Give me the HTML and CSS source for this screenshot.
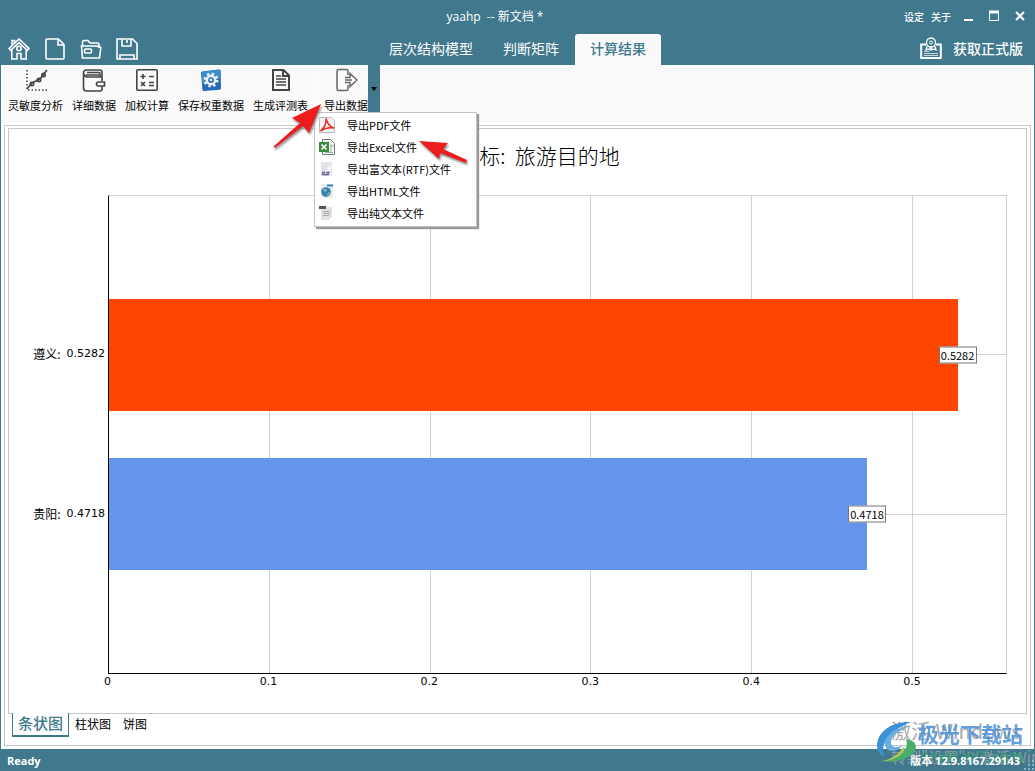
FILE: index.html
```html
<!DOCTYPE html>
<html lang="zh-CN">
<head>
<meta charset="utf-8">
<title>yaahp -- 新文档 *</title>
<link rel="stylesheet" href="styles.css">
</head>
<body>
<div class="window">
  <header class="header">
    <div class="titlebar">
      <div class="side"></div>
      <h1 class="title">yaahp&nbsp; -- 新文档 *</h1>
      <div class="side side-right">
        <button class="link-btn">设定</button>
        <button class="link-btn">关于</button>
        <button class="win-btn" aria-label="最小化"><svg width="12" height="12"><path d="M2 10h9" stroke="#fff" stroke-width="2"/></svg></button>
        <button class="win-btn" aria-label="最大化"><svg width="12" height="12"><path d="M1.500 1v9.500h9V1" fill="none" stroke="#fff"/><path d="M1 2h10" stroke="#fff" stroke-width="3"/></svg></button>
        <button class="win-btn" aria-label="关闭"><svg width="12" height="12"><path d="M2 2l8 8M10 2l-8 8" stroke="#fff" stroke-width="2"/></svg></button>
      </div>
    </div>
    <div class="navbar">
      <div class="quick">
        <button aria-label="首页"><svg width="22" height="22" viewBox="0 0 22 22"><path d="M1 10.500L11 1l10 9.500-1.600 1.800L11 4.600l-8.400 7.700zM3.800 11.500V21H9v-5.500h4V21h5.200v-9.500M4 7V2.500h2.500V5"/><circle cx="11" cy="10.500" r="2.200"/></svg></button>
        <button aria-label="新建"><svg width="22" height="22" viewBox="0 0 22 22"><path d="M3 1h11.500l5.500 5.500V20q0 1-1 1H3q-1 0-1-1V2q0-1 1-1zM14 1v6h6"/></svg></button>
        <button aria-label="打开"><svg width="22" height="22" viewBox="0 0 22 22"><path d="M2.500 8V4q0-1.500 1.500-1.500h4L10 5h7.500q1.500 0 1.500 1.500V8M1.500 8h17l2.300 1.500L19.500 20h-17zM18.500 8v2"/><rect x="4.500" y="11" width="7" height="4" rx="1"/></svg></button>
        <button aria-label="保存"><svg width="22" height="22" viewBox="0 0 22 22"><path d="M1 1h15.500L21 5.500V21H1zM6 1v7h9V1M11 2v3M4 21v-4h14v4"/></svg></button>
      </div>
      <nav class="tabs">
        <button class="tab">层次结构模型</button>
        <button class="tab">判断矩阵</button>
        <button class="tab active">计算结果</button>
      </nav>
      <button class="upgrade">
        <svg width="22" height="22" viewBox="0 0 22 22" fill="none" stroke="#fff"><path d="M6 7.500H1.200V21h19.600V7.500H16" stroke-width="2"/><circle cx="11" cy="5.500" r="4.500" stroke-width="1.300"/><circle cx="11" cy="5.500" r="1.500"/><path d="M7 9l-1 4 2.500-1L10 13l1-3 1 3 1.500-1 2.500 1-1-4" stroke-width="1.300"/><path d="M4 14.500h5M4 16.500h14M4 18.500h14" stroke="#c5d8df"/></svg>
        获取正式版
      </button>
    </div>
  </header>

  <main class="main">
    <div class="toolbar">
      <button class="tool"><svg width="24" height="24" viewBox="0 0 24 24"><path d="M3 2v20h20" stroke-dasharray="1.500 2"/><path d="M3 21l5-6 8-4 7-9"/><circle cx="8" cy="16" r="1.700"/><circle cx="15" cy="12" r="1.700"/><circle cx="19.500" cy="7" r="1.700"/></svg>灵敏度分析</button>
      <button class="tool"><svg width="24" height="24" viewBox="0 0 24 24"><path d="M20 13V4q0-2-2-2H4.500Q1.500 2 1.500 5v15q0 3 3 3H18q2 0 2-2v-3M2 6q1 3 3 3h15M5 4.500h12q1 0 1 1.500v3M4 7h13M22.500 14h-6q-2 0-2 2t2 2h6z"/></svg>详细数据</button>
      <button class="tool"><svg width="24" height="24" viewBox="0 0 24 24"><rect x="1.800" y="1.800" width="20.400" height="20.400" rx="1"/><path d="M5.500 8.500h5M8 6v5M14 8.500h5M6 14l4 4M10 14l-4 4M14 14.500h5M14 17.500h5"/></svg>加权计算</button>
      <button class="tool"><svg width="24" height="24" viewBox="0 0 24 24"><path d="M3 3.500L20 1.500q1.500 0 1.600 1.500L22 20q0 1.500-1.500 1.700L5 23q-1.500 0-1.600-1.500L2 5q0-1.300 1-1.500z" fill="#246bb9" stroke="none"/><path d="M3 4l17-2.500q1.500 0 1.600 1.500l.2 7Q11 10 3 16z" fill="#398ed0" stroke="none"/><circle cx="12" cy="12" r="6.200" stroke="#eee" stroke-width="2.500" stroke-dasharray="2.400 2.470"/><circle cx="12" cy="12" r="4.200" stroke="#eee" stroke-width="2.500"/><circle cx="12" cy="12" r="1.300" fill="#eee" stroke="none"/></svg>保存权重数据</button>
      <button class="tool"><svg width="24" height="24" viewBox="0 0 24 24"><path d="M4 2h10.500L20 7.500V22H4zM14 2v6h6" stroke-width="2"/><path d="M7 8h5M7 11h10M7 14h10M7 17h10"/></svg>生成评测表</button>
      <div class="export">
        <button class="tool"><svg width="24" height="24" viewBox="0 0 24 24"><path d="M14 7V3q0-1.500-1.500-1.500h-8Q3 1.500 3 3v18q0 1.500 1.500 1.500h8q1.500 0 1.500-1.500v-4M11 9.500h5V5.500l7 6.500-7 6.500v-4h-5M11 12h7" stroke="#666" stroke-width="1.500"/></svg>导出数据</button>
        <button class="drop" aria-label="导出选项"><svg width="6" height="4"><path d="M0 0h6L3 4z"/></svg></button>
        <div class="menu" role="menu">
          <button role="menuitem"><svg width="16" height="16" viewBox="0 0 16 16"><path d="M.5.500h12l3 3v12H.5z" fill="#f3f3f3" stroke="#bbb"/><path d="M1.500 14C5 11 7.500 6 7 1.500c1.500 5 4 8.500 8 9.500-4.500-1-9 0-13.500 3z" fill="none" stroke="#e03425" stroke-width="1.600"/></svg>导出PDF文件</button>
          <button role="menuitem"><svg width="16" height="16" viewBox="0 0 16 16"><path d="M3.500.500h8l4 4v11h-12z" fill="#f4f6f8" stroke="#708070"/><path d="M6 13.500h8M12 5v8M12 7h3" stroke="#9ab09a"/><path d="M0 3h10v10H0z" fill="#388a3c"/><path d="M2.500 5.500l5 5M7.500 5.500l-5 5" stroke="#fff" stroke-width="1.700"/></svg>导出Excel文件</button>
          <button role="menuitem"><svg width="16" height="16" viewBox="0 0 16 16"><path d="M2 1h11v14H2z" fill="#e3e2ee"/><path d="M5 13L12 3v10z" fill="#f9f9ff"/><path d="M3 11.500h3M7 11.500h4M3 13.500h7" stroke="#655c8c" stroke-width="1.500"/></svg>导出富文本(RTF)文件</button>
          <button role="menuitem"><svg width="16" height="16" viewBox="0 0 16 16"><path d="M2 1h12v14H2z" fill="#e9eef2"/><path d="M8 2.500h6" stroke="#3585c5" stroke-width="2"/><circle cx="7" cy="9" r="4.800" fill="#3480b0"/><path d="M4 6.500l3-1 1 2-2 2zM8 11l2-2 1 1-2 3z" fill="#7fc0a8"/></svg>导出HTML文件</button>
          <button role="menuitem"><svg width="16" height="16" viewBox="0 0 16 16"><path d="M2 2h11v10l-3 3H2z" fill="#e2e2e2"/><path d="M0 2.500h7" stroke="#555" stroke-width="3"/><path d="M4 6.500h7M4 8.500h7M4 10.500h6" stroke="#aaa"/></svg>导出纯文本文件</button>
        </div>
        <svg class="arrow arrow-one" width="54" height="50" viewBox="0 0 54 50"><path d="M3.500 44.500L30 21l-8-5L51 2 39 31l-6-7L5 46z"/></svg>
        <svg class="arrow arrow-two" width="54" height="32" viewBox="0 0 54 32"><path d="M3 3l29 2-5 6 24 11-1 3-26-10-1 6z"/></svg>
      </div>
    </div>

    <section class="panel">
      <div class="chart">
        <h2 class="chart-title">决策目标:&nbsp; 旅游目的地</h2>
        <div class="row-labels"><div><span>遵义: </span> 0.5282</div><div><span>贵阳: </span> 0.4718</div></div>
        <div class="plot">
          <div class="grid-x"><i></i><i></i><i></i><i></i><i></i></div>
          <div class="series">
            <div class="row"><div class="bar orange" style="width:94.6%"><span class="value">0.5282</span></div></div>
            <div class="row"><div class="bar blue" style="width:84.5%"><span class="value">0.4718</span></div></div>
          </div>
        </div>
        <div class="axis"><span>0</span><span>0.1</span><span>0.2</span><span>0.3</span><span>0.4</span><span>0.5</span></div>
      </div>
      <div class="views">
        <button class="view selected">条状图</button>
        <button class="view">柱状图</button>
        <button class="view">饼图</button>
      </div>
    </section>
  </main>

  <footer class="status">
    <span>Ready</span>
    <span class="version">版本 12.9.8167.29143</span>
    <div class="watermark">
      <div class="activate">激活 Windows</div>
      <div class="activate-sub">转到"设置"以激活 Windows</div>
      <svg width="42" height="42" viewBox="0 0 42 42"><path d="M35 1C18 0 2 9 1 24c0 7 4 10 8 12C3 25 12 10 35 1z" fill="#3d91d6"/><path d="M32 6C20 6 9 14 9 23c0 9 13 9 18 1-7 4-12 2-12-3 0-6 8-12 17-15z" fill="#69aee0"/><path d="M5 40c17-3 29-10 25-22 10 1 12 8 8 13C31 39 18 42 5 40z" fill="#48ae6c"/><path d="M4 41C17 38 24 32 28 25 31 32 20 39 4 41z" fill="#b5c55c"/></svg>
      <div class="site">极光下载站</div>
      <div class="url">www.xz7.com</div>
    </div>
    <svg class="grip" width="12" height="12"><path d="M9 2h2M5 6h2M9 6h2M1 10h2M5 10h2M9 10h2" stroke="#8fb3c0" stroke-width="2"/></svg>
  </footer>
</div>
</body>
</html>
```
FILE: styles.css
```css
* { box-sizing: border-box; }
body {
  margin: 0;
  font-family: "Noto Sans CJK SC", sans-serif;
  font-size: 11px;
  color: #000;
}
button {
  margin: 0;
  padding: 0;
  border: 0;
  background: none;
  font: inherit;
  color: inherit;
}
svg { display: block; flex: none; }
h1, h2 { margin: 0; font-weight: normal; }

.window {
  display: flex;
  flex-direction: column;
  height: 100vh;
  overflow: hidden;
  background: #40788e;
}

/* Title bar and main tabs */
.header { color: #fff; }
.titlebar { display: flex; align-items: center; height: 34px; padding-bottom: 2px; }
.side { flex: 1; }
.side-right {
  display: flex;
  justify-content: flex-end;
  align-items: center;
  padding-right: 9px;
}
.title {
  padding-right: 36px;
  font-family: "Open Sans", "Noto Sans CJK SC", sans-serif;
  font-size: 12px;
}
.link-btn { font-size: 10px; font-weight: 500; margin-right: 7px; }
.win-btn { margin-left: 14px; }
.link-btn + .win-btn { margin-left: 4px; }
.navbar { display: flex; height: 31px; }
.quick { display: flex; gap: 14px; padding: 4px 0 0 8px; width: 374px; align-items: flex-start; }
.quick svg { fill: none; stroke: #fff; stroke-width: 1.6; }
.tabs { display: flex; flex: 1; }
.tab { font-size: 14px; padding: 0 15px 3px; height: 31px; }
.tab.active {
  background: #fafafa;
  color: #40788e;
  font-weight: 500;
  border-radius: 3px 3px 0 0;
}
.tab:nth-child(2) { padding-right: 16px; }
.upgrade {
  display: flex;
  align-items: center;
  gap: 11px;
  padding: 0 12px 3px 0;
  font-size: 14px;
  font-weight: 500;
}

/* Toolbar */
.main {
  flex: 1;
  display: flex;
  flex-direction: column;
  margin: 0 1px;
  background: #fff;
  min-height: 0;
}
.toolbar {
  display: flex;
  gap: 9px;
  height: 57px;
  padding-left: 7px;
  background: #fafafa;
}
.tool {
  display: flex;
  flex-direction: column;
  align-items: center;
  gap: 5px;
  padding-top: 3px;
  line-height: 16px;
}
.tool svg { fill: none; stroke: #444; stroke-width: 1.6; }
.export {
  position: relative;
  display: flex;
  margin-left: -3px;
  border-left: 1px solid #fff;
}
.export .tool { padding-left: 9px; }
.drop {
  display: flex;
  align-items: center;
  justify-content: center;
  width: 12px;
  padding-bottom: 9px;
  background: #40788e;
}
.menu {
  position: absolute;
  z-index: 2;
  top: 47px;
  left: -1px;
  width: 163px;
  padding: 1px 0 2px 4px;
  background: #fff;
  border: 1px solid #c4c4c4;
  box-shadow: 2px 2px 1px #999;
}
.menu button {
  display: flex;
  align-items: center;
  gap: 12px;
  width: 100%;
  height: 22px;
  white-space: nowrap;
}
.arrow {
  position: absolute;
  z-index: 3;
  fill: #ee1c1c;
  filter: drop-shadow(1px 2px 1px #888);
}
.arrow-one { top: 37px; left: -45px; }
.arrow-two { top: 73px; left: 101px; }

/* Chart */
.panel {
  flex: 1;
  display: flex;
  flex-direction: column;
  min-height: 0;
  margin: 3px;
  border: 1px solid #c8c8c8;
  padding: 2px 3px 8px;
}
.chart {
  flex: 1;
  display: grid;
  grid-template-columns: 99px 1fr;
  grid-template-rows: 66px 1fr 39px;
  padding-right: 19px;
  border: 1px solid #c8c8c8;
  border-bottom-width: 0;
}
.chart-title {
  grid-column: 1 / 3;
  padding: 11px 0 0 20px;
  font-size: 21px;
  font-weight: 300;
  line-height: 30px;
  text-align: center;
}
.row-labels {
  display: flex;
  flex-direction: column;
  justify-content: center;
  gap: 10%;
  padding: 0 3px 2px 0;
  text-align: right;
  font-family: "DejaVu Sans", "Noto Sans CJK SC", sans-serif;
}
.row-labels div {
  display: flex;
  align-items: center;
  justify-content: flex-end;
  gap: 6px;
  height: 23.4%;
  white-space: nowrap;
}
.row-labels span { font-size: 12px; font-family: "Noto Sans CJK SC", sans-serif; }
.plot {
  display: grid;
  border: 1px solid #d0d0d0;
  border-left-color: #000;
  border-bottom-color: #000;
}
.grid-x, .series { grid-area: 1 / 1; }
.grid-x { display: flex; }
.grid-x i { width: 17.93%; border-right: 1px solid #d0d0d0; }
.series {
  display: flex;
  flex-direction: column;
  justify-content: center;
  gap: 10%;
}
.row {
  height: 23.4%;
  background: linear-gradient(#d0d0d0, #d0d0d0) center / 100% 1px no-repeat;
}
.bar { position: relative; height: 100%; }
.orange { background: #ff4500; }
.blue { background: #6495ed; }
.value {
  position: absolute;
  top: 50%;
  right: 0;
  transform: translate(50%, -50%);
  width: 38px;
  border: 1px solid #777;
  background: #fff;
  line-height: 15px;
  text-align: center;
}
.axis {
  grid-column: 2;
  display: flex;
  font-family: "DejaVu Sans", sans-serif;
  line-height: 16px;
}
.axis span { width: 17.9%; flex: none; margin-left: -9%; margin-right: 9%; text-align: center; }

/* Chart type tabs */
.views {
  display: flex;
  align-items: flex-start;
  height: 24px;
  padding-left: 4px;
  background: linear-gradient(#c8c8c8, #c8c8c8) top / 100% 1px no-repeat;
}
.view { font-size: 12px; line-height: 21px; padding: 0 6px; }
.view.selected {
  padding: 0 5px 3px;
  font-size: 15px;
  line-height: 19px;
  font-weight: 500;
  color: #40788e;
  background: #fff;
  border: 1px solid #40788e;
  border-top: 0;
  border-bottom-width: 2px;
}

/* Status bar */
.status {
  position: relative;
  display: flex;
  align-items: center;
  justify-content: space-between;
  height: 22px;
  padding: 0 15px 0 7px;
  color: #fff;
  font-family: "Open Sans", "Noto Sans CJK SC", sans-serif;
  font-weight: 700;
}
.version { position: relative; z-index: 2; }
.grip { position: absolute; right: 0; bottom: 0; }
.watermark {
  position: absolute;
  right: 0;
  bottom: 0;
  width: 159px;
  height: 50px;
  overflow: hidden;
  white-space: nowrap;
  font-family: "Noto Sans CJK SC", sans-serif;
  font-weight: normal;
}
.watermark > * { position: absolute; }
.activate { left: 15px; top: -2px; font-size: 20px; line-height: 24px; color: #aaa; }
.activate-sub { left: 15px; top: 26px; font-size: 15px; line-height: 20px; color: #8b9fa6; }
.site { left: 42px; top: 0; font-size: 21px; line-height: 24px; font-weight: bold; color: #4a90d9; opacity: .85; }
.url { left: 44px; top: 25px; font-size: 15px; line-height: 20px; font-weight: bold; color: #35a070; opacity: .7; }
```
